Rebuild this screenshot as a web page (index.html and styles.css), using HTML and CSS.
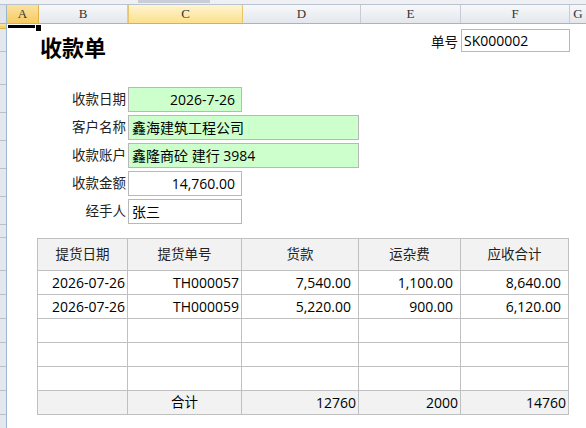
FILE: index.html
```html
<!DOCTYPE html>
<html lang="zh-CN">
  <head>
    <meta charset="UTF-8" />
    <meta name="viewport" content="width=device-width, initial-scale=1" />
    <title>收款单</title>
    <link rel="stylesheet" href="styles.css">
  </head>
  <body>
    <div class="topbar">
      <div class="thumb"></div>
    </div>

    <div class="colheads">
      <div class="corner"></div>
      <div class="colhead sel-strong w-a">A</div>
      <div class="colhead w-b">B</div>
      <div class="colhead sel w-c">C</div>
      <div class="colhead w-d">D</div>
      <div class="colhead w-e">E</div>
      <div class="colhead w-f">F</div>
      <div class="colhead w-g">G</div>
    </div>

    <div class="sheet">
      <div class="rowheads">
        <div class="rh sel-strong" style="height:5px"></div>
        <div class="rh" style="height:23px"></div>
        <div class="rh" style="height:33px"></div>
        <div class="rh" style="height:28px"></div>
        <div class="rh" style="height:28px"></div>
        <div class="rh" style="height:28px"></div>
        <div class="rh" style="height:28px"></div>
        <div class="rh" style="height:28px"></div>
        <div class="rh" style="height:13px"></div>
        <div class="rh" style="height:33px"></div>
        <div class="rh" style="height:24px"></div>
        <div class="rh" style="height:24px"></div>
        <div class="rh" style="height:24px"></div>
        <div class="rh" style="height:24px"></div>
        <div class="rh" style="height:24px"></div>
        <div class="rh" style="height:24px"></div>
        <div class="rh" style="height:24px"></div>
      </div>

      <div class="cells">
        <div class="row1">
          <div class="active-cell"></div>
          <div class="fill-handle"></div>
        </div>

        <div class="head">
          <h1 class="title">收款单</h1>
          <div class="docno">
            <span class="label">单号</span>
            <div class="box docno-box">SK000002</div>
          </div>
        </div>

        <div class="form">
          <div class="label">收款日期</div>
          <div class="box green right">2026-7-26</div>
          <div class="filler"></div>

          <div class="label">客户名称</div>
          <div class="box green wide">鑫海建筑工程公司</div>

          <div class="label">收款账户</div>
          <div class="box green wide">鑫隆商砼 建行 3984</div>

          <div class="label">收款金额</div>
          <div class="box right">14,760.00</div>
          <div class="filler"></div>

          <div class="label">经手人</div>
          <div class="box">张三</div>
          <div class="filler"></div>
        </div>

        <div class="grid">
          <div class="th">提货日期</div>
          <div class="th">提货单号</div>
          <div class="th">货款</div>
          <div class="th">运杂费</div>
          <div class="th">应收合计</div>

          <div class="td">2026-07-26</div>
          <div class="td">TH000057</div>
          <div class="td num">7,540.00</div>
          <div class="td num">1,100.00</div>
          <div class="td num">8,640.00</div>

          <div class="td">2026-07-26</div>
          <div class="td">TH000059</div>
          <div class="td num">5,220.00</div>
          <div class="td num">900.00</div>
          <div class="td num">6,120.00</div>

          <div class="td"></div><div class="td"></div><div class="td"></div><div class="td"></div><div class="td"></div>
          <div class="td"></div><div class="td"></div><div class="td"></div><div class="td"></div><div class="td"></div>
          <div class="td"></div><div class="td"></div><div class="td"></div><div class="td"></div><div class="td"></div>

          <div class="tf"></div>
          <div class="tf center">合计</div>
          <div class="tf">12760</div>
          <div class="tf">2000</div>
          <div class="tf">14760</div>
        </div>
      </div>
    </div>
  </body>
</html>
```

FILE: styles.css
```css
html,
body {
  margin: 0;
  padding: 0;
  background: #fff;
  overflow: hidden;
}
body {
  width: 586px;
  height: 428px;
  font-family: "Open Sans", "Noto Sans CJK SC", sans-serif;
  font-size: 14px;
  color: #111;
}

/* strip left over from the ribbon / scroll area */
.topbar {
  height: 4px;
  background: #eef0f3;
  border-bottom: 1px solid #b9c3cf;
  position: relative;
}
.thumb {
  position: absolute;
  left: 138px;
  top: 0;
  width: 72px;
  height: 3px;
  background: #c9ced6;
}

/* column letters */
.colheads {
  display: flex;
  height: 18px;
  border-bottom: 1px solid #9eb6ce;
}
.corner {
  width: 6px;
  background: #dfe4ea;
  border-right: 1px solid #9eb6ce;
}
.colhead {
  box-sizing: border-box;
  border-right: 1px solid #c5ccd6;
  background: linear-gradient(#f7f8fa, #e3e7ec);
  font-family: "Liberation Serif", serif;
  font-size: 13px;
  line-height: 18px;
  text-align: center;
  color: #333;
}
.colhead.sel {
  background: linear-gradient(#fff4d0, #fbe08e);
  border-right-color: #e8c46a;
  border-left: 1px solid #e8c46a;
}
.sel-strong {
  background: linear-gradient(#fbe2a0, #f6cc62) !important;
  border-right-color: #e2b24b !important;
}
.w-a { width: 32px; }
.w-b { width: 89px; }
.w-c { width: 115px; }
.w-d { width: 118px; }
.w-e { width: 100px; }
.w-f { width: 109px; }
.w-g { flex: 1; border-right: none; }

/* sheet body */
.sheet {
  display: flex;
  height: 404px;
}
.rowheads {
  width: 7px;
  flex: none;
  background: #e4e8ee;
  border-right: 1px solid #9eb6ce;
  box-sizing: border-box;
}
.rh {
  box-sizing: border-box;
  border-bottom: 1px solid #b6c2d0;
}
.rh.sel-strong {
  border-bottom-color: #e2b24b;
}
.cells {
  flex: 1;
  min-width: 0;
}

.row1 {
  height: 5px;
  position: relative;
}
.active-cell {
  position: absolute;
  left: 1px;
  top: 1px;
  width: 30px;
  height: 3px;
  background: #000;
}
.fill-handle {
  position: absolute;
  left: 28px;
  top: 1px;
  width: 5px;
  height: 6px;
  background: #000;
  border: 1px solid #fff;
  border-top: none;
}

.head {
  height: 58px;
  display: flex;
  justify-content: space-between;
  align-items: flex-start;
}
.title {
  margin: 0 0 0 33px;
  padding-top: 5px;
  font-size: 22px;
  line-height: 26px;
  font-weight: bold;
  color: #000;
}
.docno {
  display: flex;
  align-items: center;
  gap: 3px;
  margin-right: 16px;
}
.docno .label {
  font-size: 13.5px;
}
.box {
  box-sizing: border-box;
  height: 25px;
  border: 1px solid #b8b8b8;
  background: #fff;
  padding: 0 3px;
  line-height: 23px;
  white-space: nowrap;
  color: #000;
}
.docno-box {
  width: 109px;
  height: 23px;
  line-height: 21px;
  padding-left: 2px;
}
.green {
  background: #ccffcc;
}
.right {
  text-align: right;
  padding-right: 6px;
}

.form {
  display: grid;
  grid-template-columns: 121px 114px 117px;
  grid-auto-rows: 25px;
  row-gap: 3px;
}
.form .label {
  text-align: right;
  padding-right: 2px;
  line-height: 25px;
  font-size: 13.5px;
  color: #222;
}
.form .wide {
  grid-column: span 2;
}

/* delivery list */
.grid {
  display: grid;
  grid-template-columns: 90px 114px 117px 102px 108px;
  grid-template-rows: 32px repeat(6, 24px);
  margin: 14px 0 0 30px;
  width: 532px;
  box-sizing: border-box;
  border-top: 1px solid #c0c0c0;
  border-left: 1px solid #c0c0c0;
}
.th,
.td,
.tf {
  border-right: 1px solid #c0c0c0;
  border-bottom: 1px solid #c0c0c0;
  white-space: nowrap;
  color: #000;
}
.th {
  background: #f2f2f2;
  text-align: center;
  line-height: 31px;
  font-size: 13.5px;
  color: #222;
}
.td {
  text-align: right;
  padding-right: 2px;
  line-height: 23px;
}
.td.num {
  padding-right: 7px;
}
.tf {
  background: #f2f2f2;
  text-align: right;
  padding-right: 2px;
  line-height: 23px;
}
.tf.center {
  text-align: center;
  padding-right: 0;
  font-size: 13.5px;
}
```
